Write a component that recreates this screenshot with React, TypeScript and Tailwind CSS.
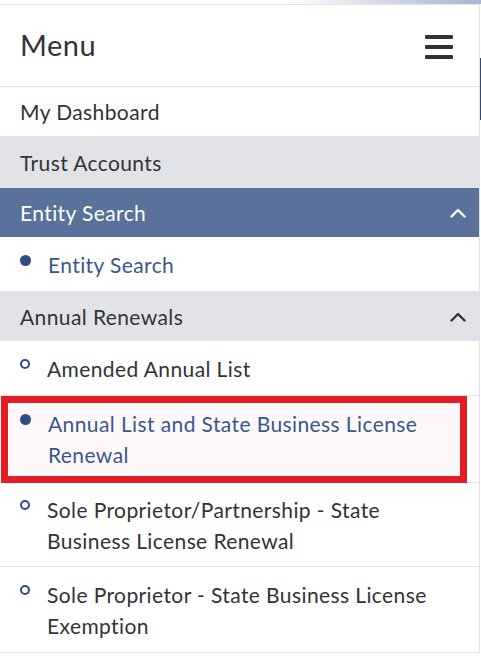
const font = { fontFamily: "Lato, 'Noto Sans', sans-serif" }

function ChevronUp({ light }: { light?: boolean }) {
  return (
    <svg width="16" height="11" viewBox="0 0 16 11" fill="none">
      <polyline
        points="1.5,9.5 8,3 14.5,9.5"
        stroke={light ? "#ffffff" : "#333333"}
        strokeWidth="2.4"
        strokeLinecap="round"
        strokeLinejoin="round"
      />
    </svg>
  )
}

function Bullet({ filled }: { filled?: boolean }) {
  return filled ? (
    <span className="mt-[6px] block h-[11px] w-[11px] shrink-0 rounded-full bg-[#2f4b80]" />
  ) : (
    <span className="mt-[6px] block h-[10px] w-[10px] shrink-0 rounded-full border-2 border-[#2f4b80]" />
  )
}

function SubItem({ label, active }: { label: string; active?: boolean }) {
  return (
    <div className="flex items-start gap-[17px]">
      <Bullet filled={active} />
      <span className={active ? "text-[#3a578c]" : "text-[#333333]"}>{label}</span>
    </div>
  )
}

export default function App() {
  return (
    <div
      className="h-[657px] w-[481px] overflow-hidden bg-white text-[21px] leading-[31px] tracking-[0.4px]"
      style={font}
    >
      <div className="h-[4px] bg-gradient-to-r from-white from-60% to-[#a9b5cc]" />
      <div className="flex">
        <div className="w-[480px] border-t border-r border-[#e2e2e2]">
          {/* header */}
          <div className="flex h-[82px] items-center justify-between border-b border-[#e2e2e2] pl-[20px] pr-[26px]">
            <span className="pb-[2px] text-[29px] tracking-[0.5px] text-[#333333]">Menu</span>
            <div className="flex w-[28px] flex-col gap-[6px] pt-[3px]">
              <span className="h-[4px] rounded-[1px] bg-[#333333]" />
              <span className="h-[4px] rounded-[1px] bg-[#333333]" />
              <span className="h-[4px] rounded-[1px] bg-[#333333]" />
            </div>
          </div>

          <div className="flex h-[49px] items-center pl-[20px] text-[#333333]">My Dashboard</div>
          <div className="flex h-[52px] items-center bg-[#e2e3e8] pl-[20px] text-[#333333]">
            Trust Accounts
          </div>
          <div className="flex h-[49px] items-center justify-between bg-[#5a7199] pl-[20px] pr-[13px] text-white">
            <span>Entity Search</span>
            <ChevronUp light />
          </div>
          <div className="flex h-[54px] items-center pl-[20px]">
            <SubItem label="Entity Search" active />
          </div>
          <div className="flex h-[50px] items-center justify-between bg-[#e2e3e8] pl-[20px] pr-[13px] text-[#333333]">
            <span>Annual Renewals</span>
            <ChevronUp />
          </div>
          <div className="flex h-[55px] items-center border-b border-[#e6e3e6] pl-[20px]">
            <SubItem label="Amended Annual List" />
          </div>

          {/* highlighted item */}
          <div className="flex h-[87px] border-b border-[#ebe5e8]">
            <div className="ml-[1px] h-[87px] w-[466px] border-[7px] border-[#e31d23] bg-[#fdf9fb] pt-[5px] pr-[4px] pl-[12px]">
              <SubItem label="Annual List and State Business License Renewal" active />
            </div>
          </div>

          <div className="h-[84px] border-b border-[#e6e3e6] pt-[11px] pr-[20px] pl-[20px]">
            <SubItem label="Sole Proprietor/Partnership - State Business License Renewal" />
          </div>
          <div className="h-[86px] border-b border-[#e6e3e6] pt-[12px] pr-[20px] pl-[20px]">
            <SubItem label="Sole Proprietor - State Business License Exemption" />
          </div>
        </div>
        <div className="w-px">
          <div className="mt-[54px] h-[62px] bg-[#2c4a75]" />
        </div>
      </div>
    </div>
  )
}
